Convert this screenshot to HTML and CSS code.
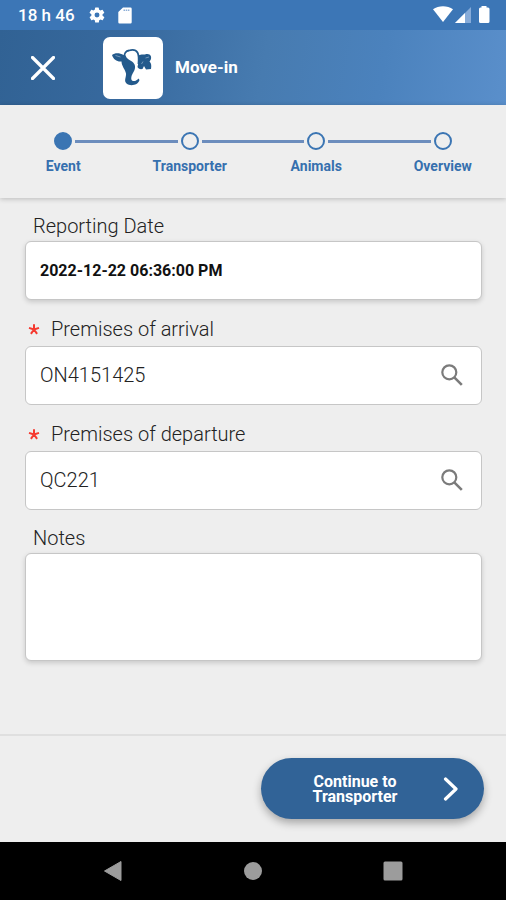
FILE: index.html
```html
<!DOCTYPE html>
<html lang="en">
<head>
<meta charset="utf-8">
<meta name="viewport" content="width=device-width, initial-scale=1">
<title>Move-in</title>
<link rel="stylesheet" href="styles.css">
</head>
<body>
<div class="status">
  <span class="status-time">18 h 46</span>
  <svg class="icon-gear" viewBox="0 0 24 24" width="18" height="18" aria-hidden="true"><path fill="#fff" fill-rule="evenodd" d="M19.4 13a7.500 7.500 0 0 0 0-2l2.100-1.600a.5.5 0 0 0 .1-.7l-2-3.400a.5.5 0 0 0-.6-.2l-2.500 1a7.300 7.300 0 0 0-1.700-1l-.4-2.600a.5.5 0 0 0-.5-.5h-4a.5.5 0 0 0-.5.5L9 5.100a7.300 7.300 0 0 0-1.700 1l-2.500-1a.5.5 0 0 0-.6.200l-2 3.400a.5.5 0 0 0 .1.700L4.500 11a7.500 7.500 0 0 0 0 2l-2.100 1.600a.5.5 0 0 0-.1.700l2 3.400c.1.200.4.300.6.200l2.500-1a7.300 7.300 0 0 0 1.700 1l.4 2.600c0 .3.200.5.500.5h4c.3 0 .5-.2.500-.5l.4-2.600a7.300 7.300 0 0 0 1.700-1l2.500 1c.2.100.5 0 .6-.2l2-3.400a.5.5 0 0 0-.1-.7zM12 15.300a3.300 3.300 0 1 1 0-6.600 3.300 3.300 0 0 1 0 6.600z"/></svg>
  <svg class="icon-card" viewBox="0 0 14 17" width="14" height="17" aria-hidden="true"><path fill="#fff" d="M5 .5h7.500A1.200 1.200 0 0 1 13.700 1.700v13.600a1.200 1.200 0 0 1-1.200 1.200h-11A1.200 1.200 0 0 1 .3 15.300V5z"/><path d="M5.500 3.300h6" stroke="#8fb0d8" stroke-width="1.500" stroke-dasharray="1.500 .7"/></svg>
  <svg class="icon-signals" viewBox="0 0 58 18" width="58" height="18" aria-hidden="true">
    <path fill="#fff" d="M0 3.200C5.500-.9 14.500-.9 20 3.200L10 16z"/>
    <path fill="#86abd9" d="M38 1v16H22z"/><path fill="#fff" d="M32 7v10H22z"/>
    <path fill="#fff" d="M48.500 1.500V0h5v1.500H55a1.500 1.500 0 0 1 1.500 1.500v12.500A1.500 1.500 0 0 1 55 17h-7.500a1.500 1.500 0 0 1-1.500-1.500V3a1.500 1.500 0 0 1 1.500-1.500z"/>
  </svg>
</div>

<header class="header">
  <button class="close" type="button" aria-label="Close">
    <svg viewBox="0 0 24 24" width="24" height="24" aria-hidden="true"><path d="M1.500 1.500l21 21M22.500 1.500l-21 21" stroke="#fff" stroke-width="3.200" stroke-linecap="round"/></svg>
  </button>
  <div class="logo">
    <svg viewBox="0 0 60 62" width="60" height="62" aria-hidden="true">
      <g fill="#235a8c">
        <path d="M9 18C12 15.500 17 16 20.500 18L22.500 18.500C23.500 21.500 26 23 29 24.500C32.500 27 33 31 30.500 35C28.500 38 27.500 42 29 43.500C31 45 34 43.500 35.500 41.500L36.500 43C35 48.500 27 49.500 23.500 46.500C20.500 43.500 23.500 40 23 36.500C22.500 33 18.500 29 18.500 24.500C14 25 10.500 22.500 9 18z"/>
        <path d="M35.500 18.500C38 17 40 17.500 42 17.500C44.500 16.500 47 17 48 19.500C48.500 21.500 47.500 23.500 46.500 24.500C48.500 26 48.500 29 48 32L43 32.500L41 29L39.500 32C37 32.500 35 31.500 34.500 30C35.500 26 36 22 35.500 18.500z"/>
      </g>
      <path d="M21.500 20C21 16.500 23 14 26 13.500C29.500 12.500 33 13 34.500 15.500C36 18 36 21 35.500 27" fill="none" stroke="#235a8c" stroke-width="1.800"/>
      <path d="M12.500 18.500l5 1.500M42.500 21l3.500-1M38.500 27l1.500-2.500" fill="none" stroke="#7398ba" stroke-width="1"/>
    </svg>
  </div>
  <h1 class="title">Move-in</h1>
</header>

<ol class="steps">
  <li class="step step-active" aria-current="step"><span class="track"><span class="dot"></span></span>Event</li>
  <li class="step"><span class="track"><span class="dot"></span></span>Transporter</li>
  <li class="step"><span class="track"><span class="dot"></span></span>Animals</li>
  <li class="step"><span class="track"><span class="dot"></span></span>Overview</li>
</ol>

<form class="form" id="event-form">
  <div class="field">
    <label class="label" for="date">Reporting Date</label>
    <div class="box box-raised"><input class="input input-date" id="date" type="text" value="2022-12-22 06:36:00 PM"></div>
  </div>
  <div class="field">
    <label class="label label-required" for="arrival"><svg class="star" viewBox="0 0 12 12" width="12" height="12" aria-hidden="true"><path d="M6 6.500V1.300M6 6.500L1 4.900M6 6.500l5-1.600M6 6.500l-3.100 4.400M6 6.500l3.100 4.400" stroke="#f5392f" stroke-width="2"/></svg>Premises of arrival</label>
    <div class="box">
      <input class="input" id="arrival" type="text" value="ON4151425" required>
      <button class="search" type="button" aria-label="Search premises of arrival"><svg viewBox="0 0 22 22" width="22" height="22" aria-hidden="true"><circle cx="8.300" cy="8.300" r="7" fill="none" stroke="#7b7b7b" stroke-width="2.200"/><path d="M13.300 13.300l7.500 7.500" stroke="#7b7b7b" stroke-width="2.600"/></svg></button>
    </div>
  </div>
  <div class="field">
    <label class="label label-required" for="departure"><svg class="star" viewBox="0 0 12 12" width="12" height="12" aria-hidden="true"><path d="M6 6.500V1.300M6 6.500L1 4.900M6 6.500l5-1.600M6 6.500l-3.100 4.400M6 6.500l3.100 4.400" stroke="#f5392f" stroke-width="2"/></svg>Premises of departure</label>
    <div class="box">
      <input class="input" id="departure" type="text" value="QC221" required>
      <button class="search" type="button" aria-label="Search premises of departure"><svg viewBox="0 0 22 22" width="22" height="22" aria-hidden="true"><circle cx="8.300" cy="8.300" r="7" fill="none" stroke="#7b7b7b" stroke-width="2.200"/><path d="M13.300 13.300l7.500 7.500" stroke="#7b7b7b" stroke-width="2.600"/></svg></button>
    </div>
  </div>
  <div class="field">
    <label class="label" for="notes">Notes</label>
    <textarea class="box box-raised notes" id="notes"></textarea>
  </div>
</form>

<footer class="footer">
  <button class="continue" type="submit" form="event-form">
    <span class="continue-text">Continue to<br>Transporter</span>
    <svg viewBox="0 0 16 24" width="16" height="24" aria-hidden="true"><path d="M2.500 2l10.500 10L2.500 22" fill="none" stroke="#fff" stroke-width="3.200" stroke-linecap="round" stroke-linejoin="round"/></svg>
  </button>
</footer>

<nav class="system" aria-label="System">
  <button class="key" type="button" aria-label="Back"><svg viewBox="0 0 20 22" width="20" height="22" aria-hidden="true"><path d="M1.500 11L18 1.500v19z" fill="#9c9c9c" stroke="#9c9c9c" stroke-linejoin="round"/></svg></button>
  <button class="key" type="button" aria-label="Home"><svg viewBox="0 0 18 18" width="18" height="18" aria-hidden="true"><circle cx="9" cy="9" r="9" fill="#9c9c9c"/></svg></button>
  <button class="key" type="button" aria-label="Recent apps"><svg viewBox="0 0 20 20" width="20" height="20" aria-hidden="true"><rect x=".5" y=".5" width="19" height="19" rx="1.500" fill="#9c9c9c"/></svg></button>
</nav>
</body>
</html>
```

FILE: styles.css
```css
* {
  box-sizing: border-box;
}

body {
  margin: 0;
  min-height: 100vh;
  display: flex;
  flex-direction: column;
  background: #eee;
  color: #222;
  font-family: Roboto, "Liberation Sans", sans-serif;
}

button {
  padding: 0;
  border: 0;
  background: none;
  color: inherit;
  font: inherit;
  cursor: pointer;
}

svg {
  display: block;
  flex: none;
}

.status {
  display: flex;
  align-items: center;
  height: 30px;
  padding: 0 15px 0 18px;
  background: #3c76b6;
  color: #fff;
}

.status-time {
  font-size: 17px;
  font-weight: 500;
  line-height: 20px;
}

.icon-gear {
  margin-left: 13px;
}

.icon-card {
  margin-left: 12px;
}

.icon-signals {
  margin-left: auto;
}

.header {
  display: flex;
  align-items: center;
  height: 75px;
  padding: 0 31px;
  background: linear-gradient(100deg, #316294 0%, #37699e 25%, #477bb0 52%, #4b82bd 75%, #5a8fcb 100%);
  color: #fff;
}

.logo {
  margin-left: 48px;
  border-radius: 7px;
  background: #fff;
}

.title {
  margin: 0 0 0 12px;
  padding-bottom: 2px;
  font-size: 17px;
  font-weight: 700;
  line-height: 20px;
}

.steps {
  display: flex;
  margin: 0;
  padding: 27px 0 22px;
  list-style: none;
  background: #eee;
  box-shadow: 0 1px 5px rgba(0, 0, 0, 0.22);
}

.step {
  flex: 1;
  color: #3670ae;
  font-size: 14px;
  font-weight: 700;
  line-height: 20px;
  text-align: center;
}

.track {
  display: flex;
  align-items: center;
  gap: 3px;
  margin-bottom: 6px;
}

.track::before,
.track::after {
  content: "";
  flex: 1;
  height: 3px;
  background: #6c8dbd;
}

.step:first-child .track::before,
.step:last-child .track::after {
  background: none;
}

.dot {
  width: 18px;
  height: 18px;
  border: 2px solid #3b75b3;
  border-radius: 50%;
}

.step-active .dot {
  background: #3b75b3;
}

.form {
  flex: 1;
  display: flex;
  flex-direction: column;
  gap: 17px;
  padding: 17px 24px 24px 25px;
}

.label {
  display: flex;
  align-items: center;
  padding: 0 8px 4px;
  color: #222;
  font-size: 20px;
  font-weight: 300;
  line-height: 22px;
}

.label-required {
  padding: 0 3px 5px;
  line-height: 24px;
}

.star {
  margin-right: 11px;
}

.box {
  display: flex;
  align-items: center;
  width: 100%;
  height: 59px;
  padding: 0 18px 2px 14px;
  border: 1px solid #c6c6c6;
  border-radius: 6px;
  background: #fff;
}

.box-raised {
  padding-bottom: 0;
  box-shadow: 0 2px 5px rgba(0, 0, 0, 0.16);
}

.input {
  flex: 1;
  min-width: 0;
  padding: 0;
  border: 0;
  outline: 0;
  background: none;
  color: #222;
  font: 300 20px/24px Roboto, "Liberation Sans", sans-serif;
}

.input-date {
  color: #111;
  font-size: 16px;
  font-weight: 700;
}

.notes {
  display: block;
  height: 108px;
  padding: 14px;
  resize: none;
  font: 300 20px/24px Roboto, "Liberation Sans", sans-serif;
}

.footer {
  display: flex;
  justify-content: flex-end;
  padding: 22px 22px 23px;
  border-top: 2px solid #dfdfdf;
}

.continue {
  display: flex;
  align-items: center;
  width: 223px;
  height: 61px;
  padding: 0 25px 0 6px;
  border-radius: 31px;
  background: #316397;
  color: #fff;
  box-shadow: 0 4px 8px rgba(0, 0, 0, 0.3);
}

.continue-text {
  flex: 1;
  font-size: 16px;
  font-weight: 700;
  line-height: 15px;
}

.system {
  display: flex;
  align-items: center;
  justify-content: center;
  height: 58px;
  background: #000;
}

.key {
  display: flex;
  justify-content: center;
  width: 140px;
}
```
